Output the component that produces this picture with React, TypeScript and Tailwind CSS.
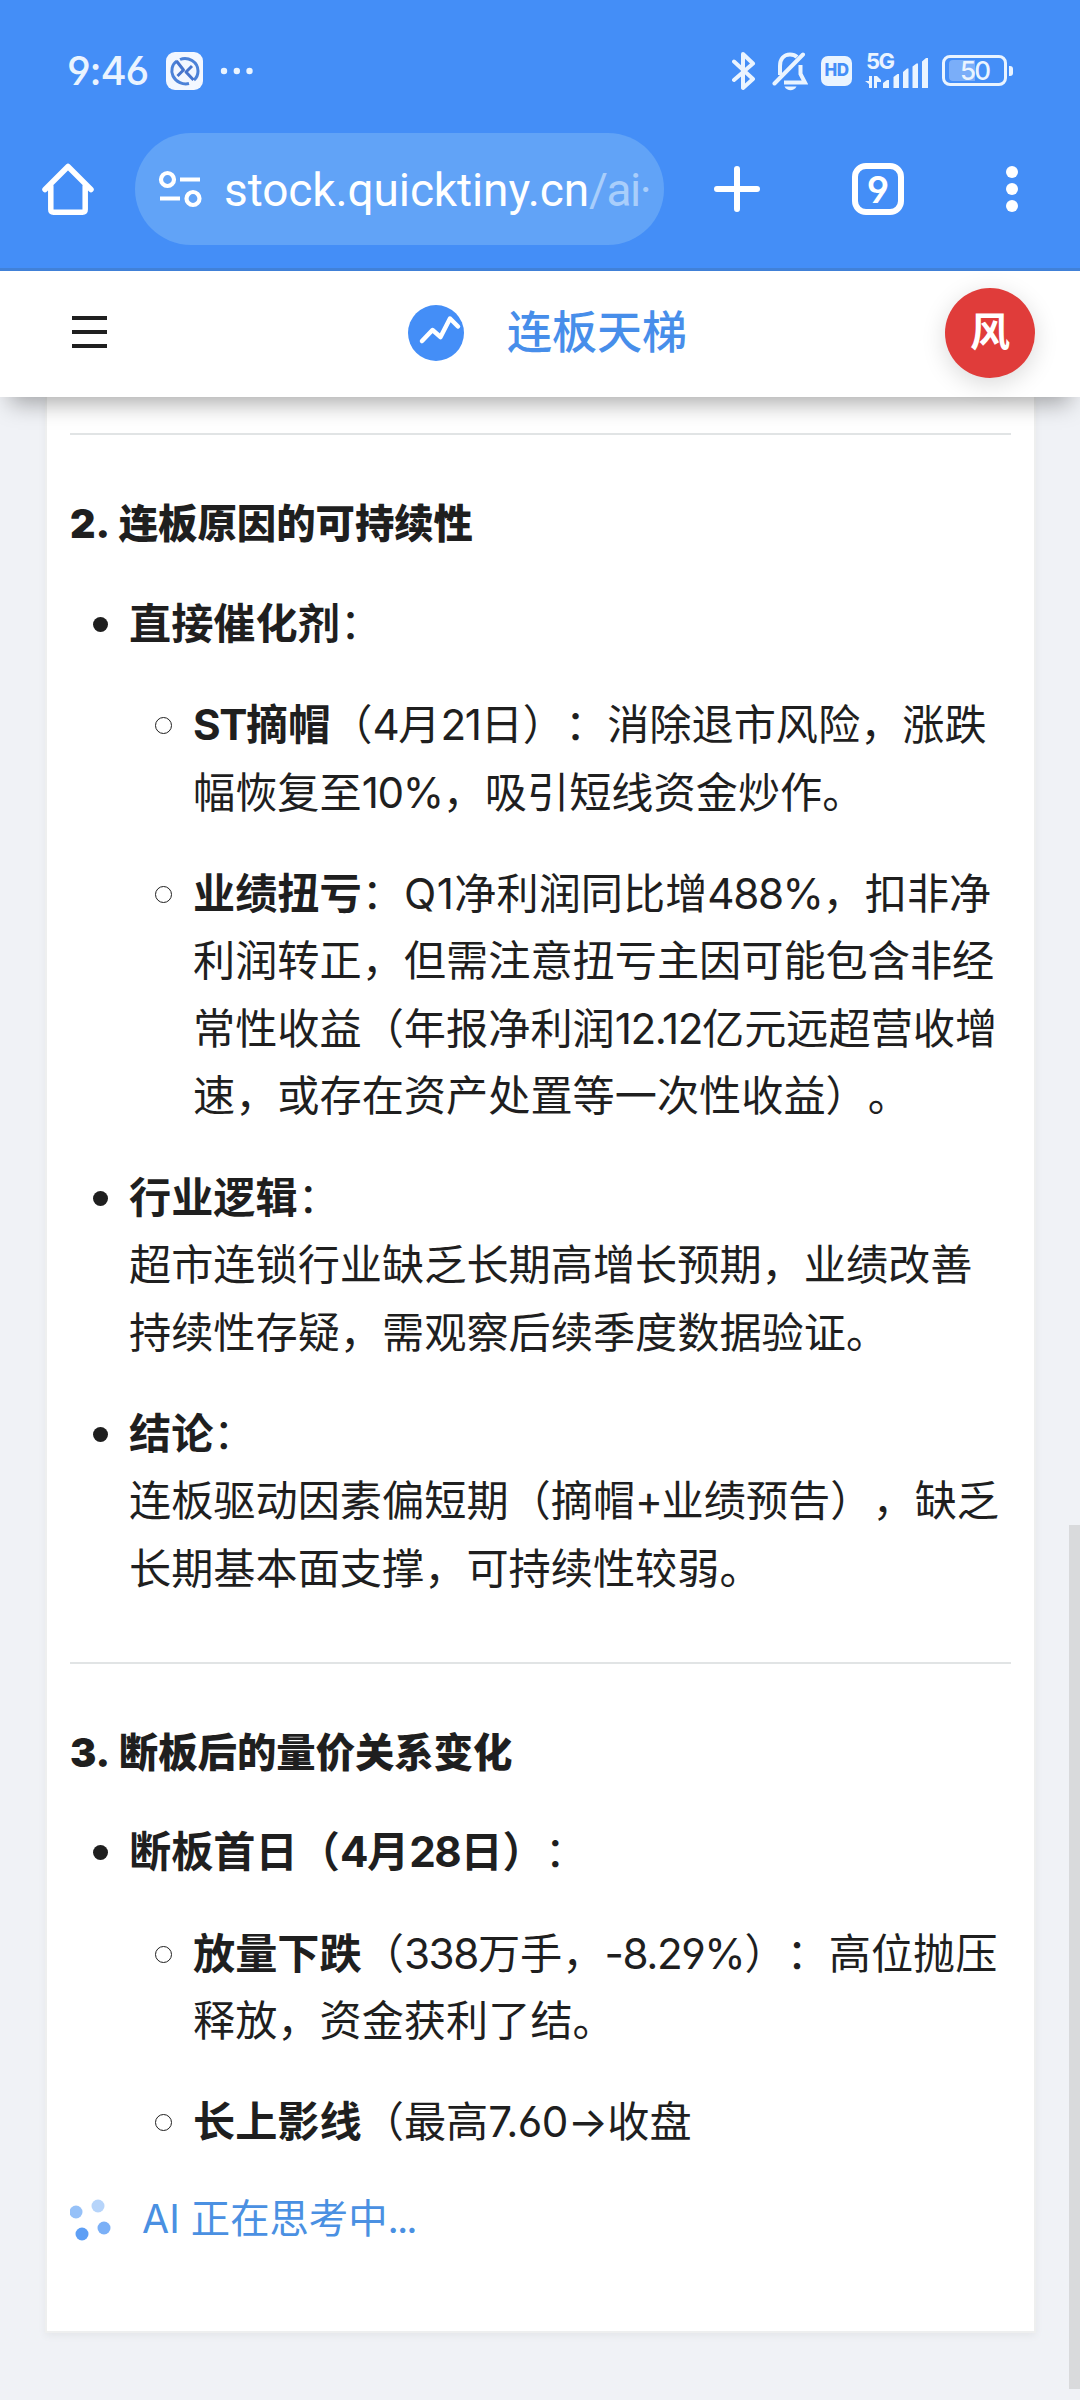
import React from "react";

function App() {
  return (
    <div className="flex h-[2400px] w-[1080px] flex-col overflow-hidden bg-[#f0f2f6] font-['Inter','Noto_Sans_CJK_SC',sans-serif] text-[#1f1f1f] [font-feature-settings:'cv03','cv04'] [text-spacing-trim:space-all]">
      <div className="h-[271px] shrink-0 border-b-[3px] border-[#4181d8] bg-[#448ef7]">
        <StatusBar />
        <BrowserBar />
      </div>
      <NavBar />
      <div className="relative flex-1 overflow-hidden">
        <Article />
        {/* page scroll thumb */}
        <div className="absolute right-0 top-[1128px] h-[864px] w-[11px] bg-[#d9dadc]" />
      </div>
    </div>
  );
}

function StatusBar() {
  return (
    <div className="flex h-[133px] items-center pl-[67px] pr-[67px] pt-[8px] text-[#eaf4ff]">
      <span className="w-[99px] whitespace-nowrap text-[40px] font-medium leading-none tracking-[-1.2px]">
        9:46
      </span>
      <svg className="h-[38px] w-[37px]" viewBox="0 0 37 38" fill="none">
        <rect width="37" height="38" rx="9" fill="#f3f7ff" />
        <path
          d="M14 7.5C22 4 32 10 32 19c0 4-1.500 7-4 9M11 9C6 12 4.500 19 7 24c3 6 10 9 16 7.500"
          stroke="#4c82d8"
          strokeWidth="3"
        />
        <path
          d="M10.500 9 17.500 18l-6 6M26 14l-6 6 7.500 8"
          stroke="#4774cc"
          strokeWidth="3"
          strokeLinejoin="round"
        />
      </svg>
      <svg className="ml-[17px] h-[8px] w-[34px]" viewBox="0 0 34 8" fill="currentColor">
        <circle cx="4" cy="4" r="3.200" />
        <circle cx="16.800" cy="4" r="3.200" />
        <circle cx="29.500" cy="4" r="3.200" />
      </svg>

      <svg
        className="ml-auto h-[40px] w-[24px]"
        viewBox="0 0 24 40"
        fill="none"
        stroke="currentColor"
        strokeWidth="4"
        strokeLinecap="round"
        strokeLinejoin="round"
      >
        <path d="M2 10.500 21 28 11 37V3l10 9.500L2 29" />
      </svg>
      <svg className="ml-[16px] h-[40px] w-[36px]" viewBox="0 0 36 40" fill="none">
        <path
          d="M8 24V15C8 8 12 3.500 18 3.500c3 0 5.500 1 7 2.500M28.500 14v9l4.500 8.500H12"
          stroke="currentColor"
          strokeWidth="4"
        />
        <path d="M2.500 32.500 31 3.500" stroke="currentColor" strokeWidth="4" strokeLinecap="round" />
        <path d="M12.500 35.500h12c-2.500 5-9.500 5-12 0Z" fill="currentColor" />
      </svg>
      <span className="ml-[13px] flex h-[30px] w-[31px] items-center justify-center rounded-[7px] bg-[#eaf4ff] text-[17px] font-extrabold leading-none tracking-[-0.5px] text-[#448ef7]">
        HD
      </span>
      <div className="relative ml-[13px] h-[36px] w-[63px]">
        <svg className="h-[36px] w-[63px]" viewBox="0 0 63 36" fill="currentColor">
          <path d="M4 23h3v12H4v-4l-4-3h4ZM9 23h3l4 4v2h-4v6H9Z" />
          <path d="m18 30 4-3h2v8h-6ZM28.500 24l4-3h1.500v14h-5.500ZM38 19l4-3.500h1.500V35H38ZM47.500 13.500l4-3H53V35h-5.500ZM57 8.500 61 5h2v30h-6Z" />
        </svg>
        <span className="absolute left-[1px] top-[-1px] text-[22px] font-bold leading-[18px] tracking-[-1.5px]">
          5G
        </span>
      </div>
      <div className="ml-[14px] flex items-center">
        <div className="relative flex h-[31px] w-[65px] items-center justify-center rounded-[8px] border-[3px] border-current text-[26px] font-medium leading-none tracking-[-2px]">
          <div className="absolute left-[4px] top-[2px] h-[21px] w-[26px] rounded-l-[4px] bg-[#7aaef9]" />
          <span className="relative">50</span>
        </div>
        <div className="ml-[2px] h-[10px] w-[4px] rounded-r-[3px] bg-current" />
      </div>
    </div>
  );
}

function BrowserBar() {
  return (
    <div className="flex h-[112px] items-center text-white">
      <svg
        className="ml-[41px] h-[54px] w-[54px]"
        viewBox="0 0 54 54"
        fill="none"
        stroke="currentColor"
        strokeWidth="5.500"
        strokeLinejoin="round"
        strokeLinecap="round"
      >
        <path d="M4 27.500 27 4.500l23 23M9.800 24v23.500q0 2.700 2.700 2.700h29q2.700 0 2.700-2.700V24" />
      </svg>
      <div className="ml-[40px] flex h-[112px] w-[529px] items-center rounded-full bg-[#61a3f7]">
        <svg
          className="ml-[23px] h-[38px] w-[44px]"
          viewBox="0 0 44 38"
          fill="none"
          stroke="currentColor"
          strokeWidth="4.200"
        >
          <circle cx="9.500" cy="9.500" r="6.500" />
          <path d="M22 9.500h20M2 28.500h20" />
          <circle cx="35" cy="28.500" r="6.500" />
        </svg>
        <span className="ml-[22px] whitespace-nowrap pt-[2px] font-['Roboto',sans-serif] text-[46px] leading-none tracking-[-0.1px]">
          stock.quicktiny.cn
          <span className="tracking-[-1.5px] text-[#a9cefb]">/ai·</span>
        </span>
      </div>
      <svg
        className="ml-[48px] h-[50px] w-[50px]"
        viewBox="0 0 50 50"
        stroke="currentColor"
        strokeWidth="6"
        strokeLinecap="round"
      >
        <path d="M25 5v40M5 25h40" />
      </svg>
      <span className="ml-[90px] flex h-[52px] w-[52px] items-center justify-center rounded-[14px] border-[6px] border-white text-[37px] font-semibold leading-none">
        9
      </span>
      <svg className="ml-[101px] h-[50px] w-[14px]" viewBox="0 0 14 50" fill="currentColor">
        <circle cx="7" cy="8" r="6" />
        <circle cx="7" cy="25" r="6" />
        <circle cx="7" cy="42" r="6" />
      </svg>
    </div>
  );
}

function NavBar() {
  return (
    <div className="relative z-10 flex h-[126px] shrink-0 items-center bg-white pb-[3px] shadow-[0_16px_22px_-10px_rgba(0,0,0,0.34)]">
      <svg className="mb-[2px] ml-[72px] h-[32px] w-[35px]" viewBox="0 0 35 32" fill="currentColor">
        <path d="M0 0h35v4H0ZM0 14h35v4H0ZM0 28h35v4H0Z" />
      </svg>
      <svg className="ml-[301px] h-[56px] w-[56px]" viewBox="0 0 56 56" fill="none">
        <circle cx="28" cy="28" r="28" fill="#448ef7" />
        <path
          d="M14 36 24.500 25l8 7L42 13.500l8 8"
          stroke="white"
          strokeWidth="4.500"
          strokeLinecap="round"
          strokeLinejoin="round"
        />
      </svg>
      <h1 className="ml-[43px] w-[180px] whitespace-nowrap text-[45px] font-medium leading-none text-[#478eea]">
        连板天梯
      </h1>
      <div className="ml-[258px] flex h-[90px] w-[90px] items-center justify-center rounded-full bg-[#e03c3a] pb-[1px] text-[40px] font-bold leading-none text-white shadow-[0_6px_24px_rgba(0,0,0,0.15)]">
        风
      </div>
    </div>
  );
}

function Article() {
  return (
    <div className="ml-[45px] h-[1936px] w-[991px] border-2 border-t-0 border-[#eeefef] bg-white px-[23px] pt-[36px] shadow-[0_3px_8px_rgba(0,0,0,0.05)]">
      <hr className="border-t-2 border-[#e1e4e5]" />
      <Heading>2. 连板原因的可持续性</Heading>
      <ul className="mt-[33.75px] flex flex-col gap-[33.75px]">
        <Item>
          <Line>
            <b className="font-bold">直接催化剂</b>：
          </Line>
        </Item>
        <SubItem>
          <Line>
            <b className="font-bold">
              <Num>ST</Num>摘帽
            </b>
            （<Num>4</Num>月<Num>21</Num>日）：消除退市风险，涨跌
          </Line>
          <Line>
            幅恢复至<Num>10%</Num>，吸引短线资金炒作。
          </Line>
        </SubItem>
        <SubItem>
          <Line>
            <b className="font-bold">业绩扭亏</b>：<span className="tracking-[0.5px]">Q1</span>
            净利润同比增<Num>488%</Num>，扣非净
          </Line>
          <Line>利润转正，但需注意扭亏主因可能包含非经</Line>
          <Line>
            常性收益（年报净利润<Num>12.12</Num>亿元远超营收增
          </Line>
          <Line>速，或存在资产处置等一次性收益）。</Line>
        </SubItem>
        <Item>
          <Line>
            <b className="font-bold">行业逻辑</b>：
          </Line>
          <Line>超市连锁行业缺乏长期高增长预期，业绩改善</Line>
          <Line>持续性存疑，需观察后续季度数据验证。</Line>
        </Item>
        <Item>
          <Line>
            <b className="font-bold">结论</b>：
          </Line>
          <Line>
            连板驱动因素偏短期（摘帽<Num>+</Num>业绩预告），缺乏
          </Line>
          <Line>长期基本面支撑，可持续性较弱。</Line>
        </Item>
      </ul>
      <hr className="mt-[59.25px] border-t-2 border-[#e1e4e5]" />
      <Heading>3. 断板后的量价关系变化</Heading>
      <ul className="mt-[33.75px] flex flex-col gap-[33.75px]">
        <Item>
          <Line>
            <b className="font-bold">
              断板首日（<Num>4</Num>月<Num>28</Num>日）
            </b>
            ：
          </Line>
        </Item>
        <SubItem>
          <Line>
            <b className="font-bold">放量下跌</b>（<Num>338</Num>万手，<Num>-8.29%</Num>
            ）：高位抛压
          </Line>
          <Line>释放，资金获利了结。</Line>
        </SubItem>
        <SubItem>
          <Line>
            <b className="font-bold">长上影线</b>（最高
            <span className="tracking-[-0.6px]">7.60→</span>收盘
          </Line>
        </SubItem>
      </ul>
      <Thinking />
    </div>
  );
}

function Heading({ children }: { children: React.ReactNode }) {
  return (
    <h2 className="mt-[57px] whitespace-nowrap text-[39.375px] font-black leading-[64px] [word-spacing:3px]">
      {children}
    </h2>
  );
}

function Line({ children }: { children: React.ReactNode }) {
  return <span className="block whitespace-nowrap">{children}</span>;
}

// Latin digits run a little wide next to the Chinese glyphs
function Num({ children }: { children: React.ReactNode }) {
  return <span className="tracking-[-1.4px]">{children}</span>;
}

function Item({ children }: { children: React.ReactNode }) {
  return (
    <li className="flex pl-[23px] text-[42.1875px] leading-[67.5px]">
      <span className="mr-[21px] mt-[27px] h-[15px] w-[15px] shrink-0 rounded-full bg-[#1f1f1f]" />
      <div>{children}</div>
    </li>
  );
}

function SubItem({ children }: { children: React.ReactNode }) {
  return (
    <li className="flex pl-[85px] text-[42.1875px] leading-[67.5px]">
      <span className="mr-[21px] mt-[26px] h-[17px] w-[17px] shrink-0 rounded-full border border-[#1f1f1f]" />
      <div>{children}</div>
    </li>
  );
}

function Thinking() {
  return (
    <div className="mt-[33px] flex h-[60px] items-center text-[#4a90e2]">
      <svg className="h-[46px] w-[46px]" viewBox="0 0 46 46" fill="#5e9ff5">
        <circle cx="6" cy="16" r="6.500" opacity="0.650" />
        <circle cx="28" cy="10" r="6.500" opacity="0.450" />
        <circle cx="34" cy="32" r="6.500" opacity="0.820" />
        <circle cx="12" cy="38" r="6.500" />
      </svg>
      <span className="ml-[26px] whitespace-nowrap text-[39.375px] leading-none">
        AI 正在思考中<span className="tracking-[-2px]">...</span>
      </span>
    </div>
  );
}

export default App;
